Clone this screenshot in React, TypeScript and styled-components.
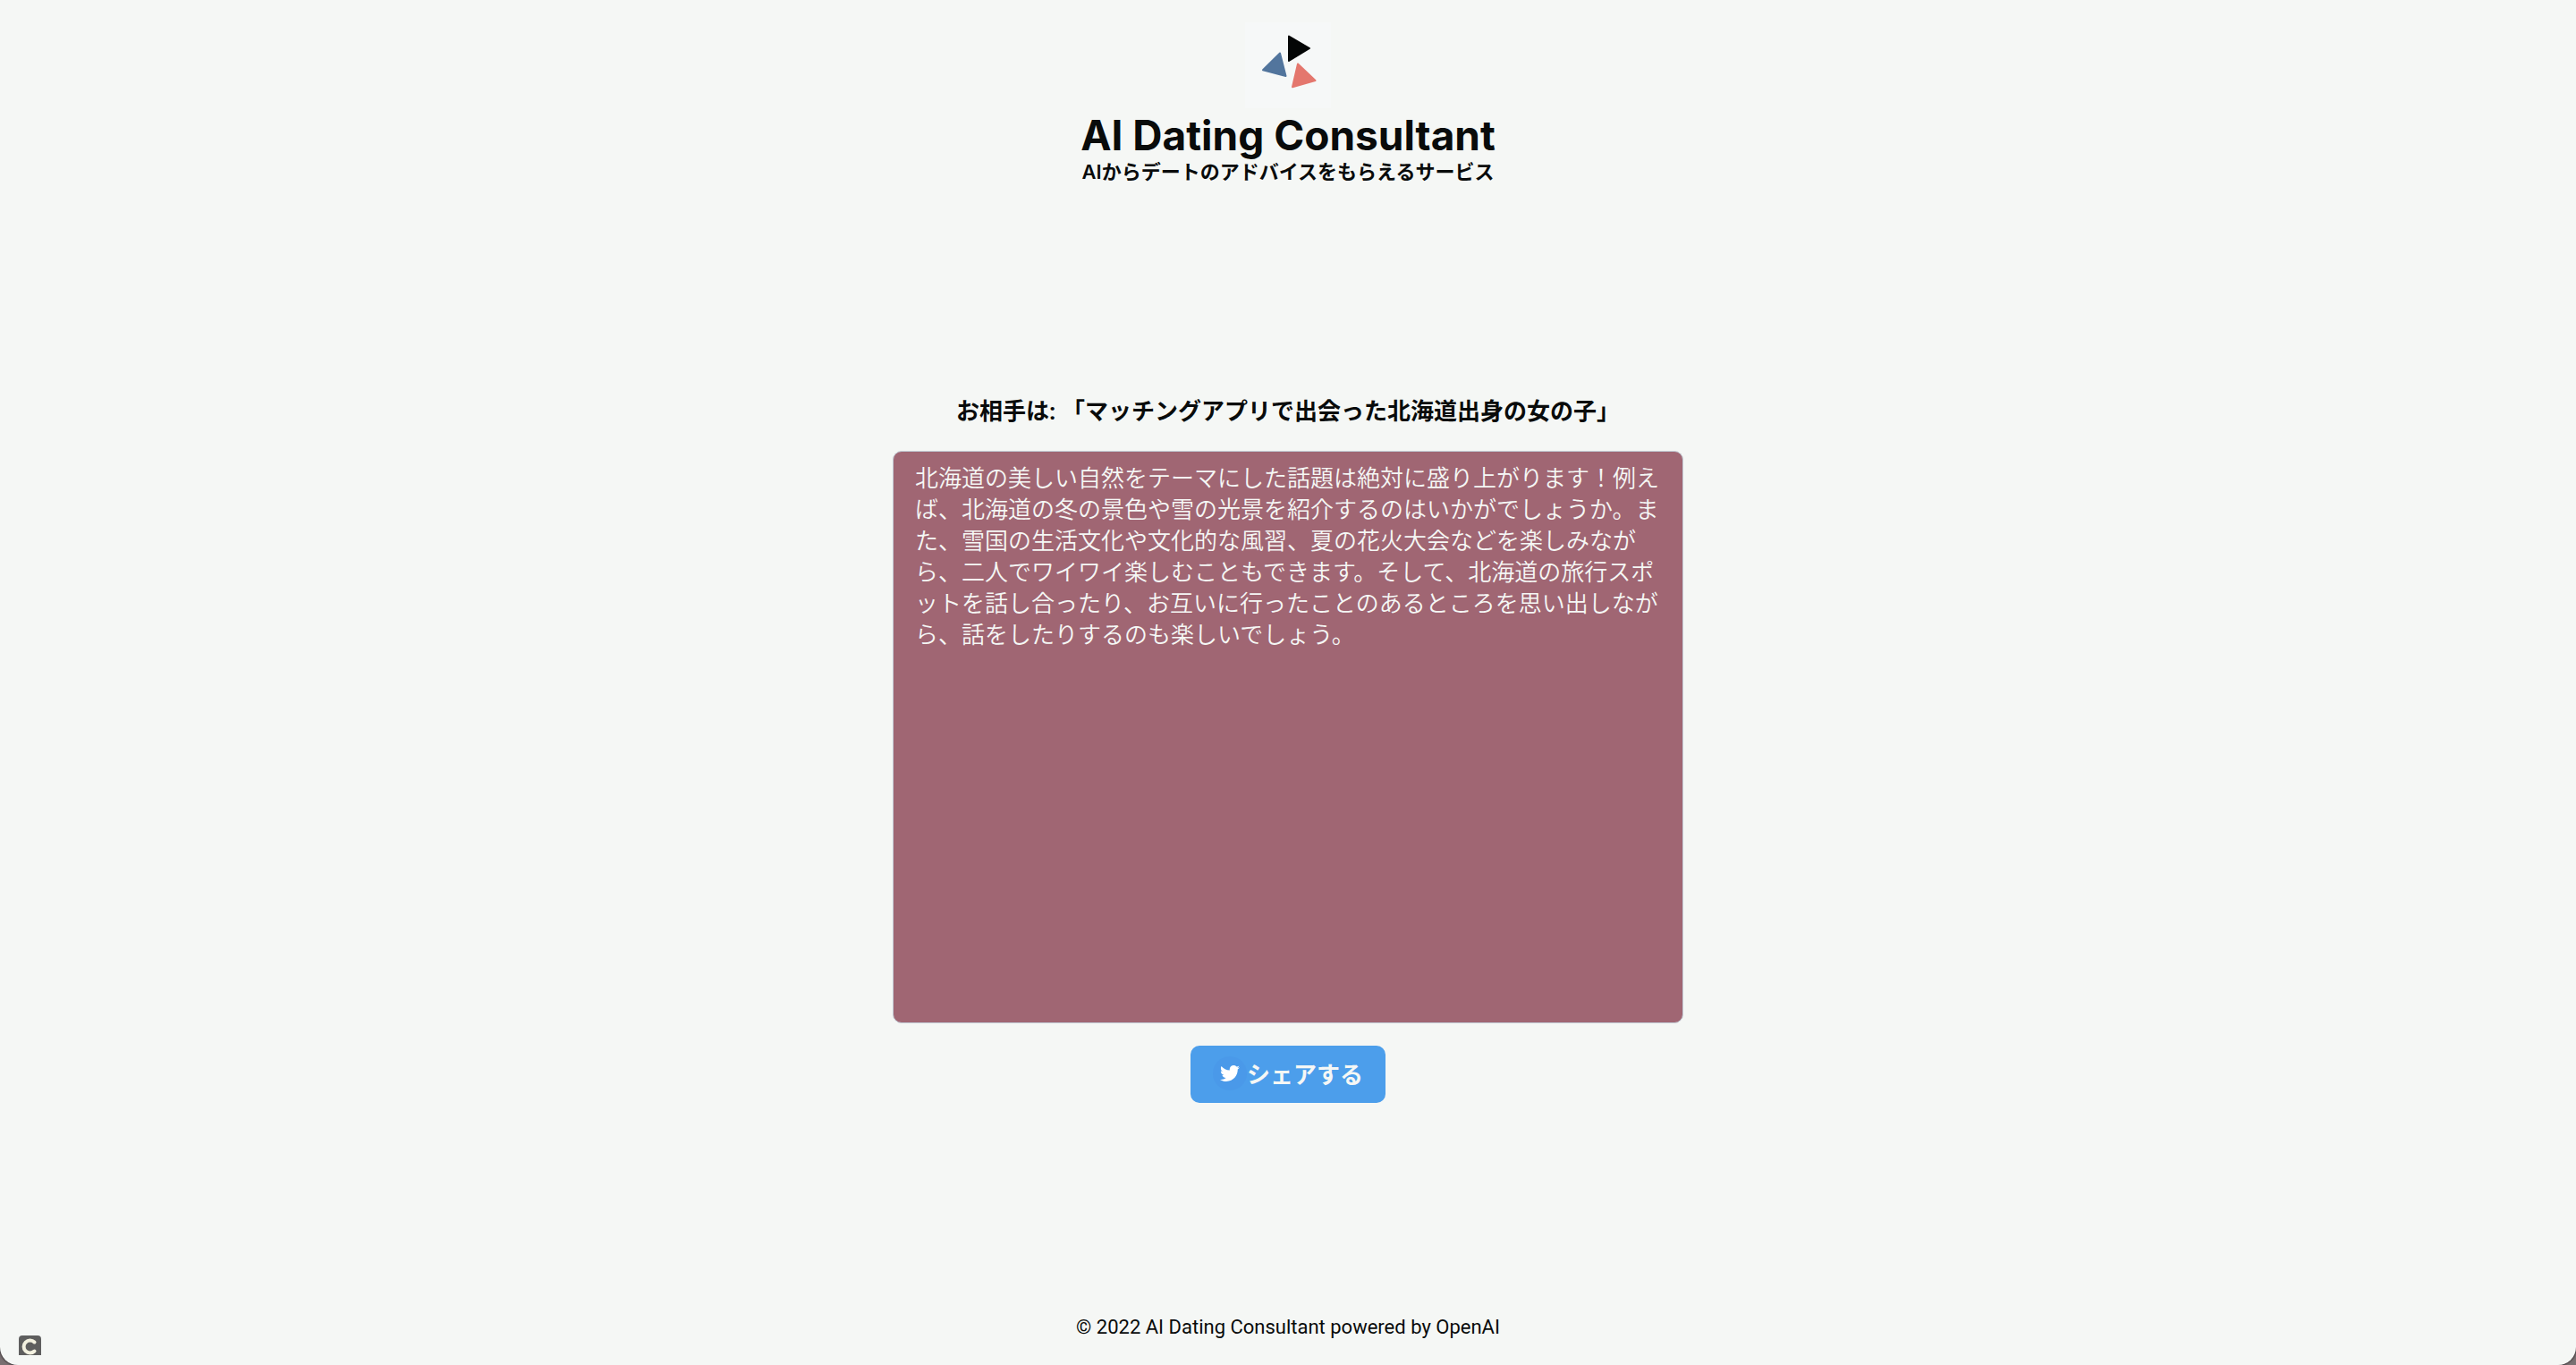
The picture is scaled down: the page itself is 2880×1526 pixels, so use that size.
import React from "react";
import styled, { createGlobalStyle } from "styled-components";
import { FaTwitter } from "react-icons/fa";

const GlobalStyle = createGlobalStyle`
  *, *::before, *::after { box-sizing: border-box; }
  html { background: #7a7072; }
  body {
    margin: 0;
    color: #090b0b;
    font-family: Roboto, "Noto Sans CJK JP", sans-serif;
  }
  h1, h2, p { margin: 0; }
`;

const Page = styled.div`
  position: relative;
  display: flex;
  flex-direction: column;
  min-height: 100vh;
  background: #f5f7f5;
  border-radius: 0 0 20px 20px;
  box-shadow: 0 0 2px 1px #3c3638;
`;

const Header = styled.header`
  display: flex;
  flex-direction: column;
  align-items: center;
  padding-top: 25px;
`;

const Logo = styled.svg`
  width: 96px;
  height: 96px;
  background: #f6f8f8;
`;

const Title = styled.h1`
  font-family: Inter, sans-serif;
  font-size: 46px;
  line-height: 60px;
  font-weight: 700;
`;

const Tagline = styled.p`
  font-family: Inter, "Noto Sans CJK JP", sans-serif;
  font-size: 22px;
  line-height: 22px;
  font-weight: 600;
`;

const Main = styled.main`
  flex: 1;
  display: flex;
  flex-direction: column;
  align-items: center;
  justify-content: center;
  padding: 0 24px;
`;

const Partner = styled.h2`
  font-size: 26px;
  line-height: 38px;
  font-weight: 700;
`;

const Advice = styled.p`
  width: 100%;
  max-width: 884px;
  min-height: 640px;
  margin: 25px 0;
  padding: 13px 24px;
  border: 1px solid #c3ccd6;
  border-radius: 10px;
  background: #a06673;
  color: #f5f7f5;
  font-size: 26px;
  line-height: 35px;
  font-weight: 350;
`;

const ShareButton = styled.button`
  display: flex;
  align-items: center;
  height: 64px;
  padding: 0 25px 2px;
  border: 0;
  border-radius: 10px;
  background: #4c9eeb;
  color: #f5f7f5;
  font: inherit;
  font-size: 26px;
  font-weight: 700;
  cursor: pointer;
`;

const IconCircle = styled.span`
  display: grid;
  place-items: center;
  width: 38px;
  height: 38px;
  border-radius: 50%;
  background: #4a99e9;
  color: #ffffff;
  font-size: 22px;
`;

const Footer = styled.footer`
  padding: 0 24px 28px;
  text-align: center;
  font-size: 22px;
  line-height: 28px;
`;

const CornerBadge = styled.svg`
  position: absolute;
  left: 21px;
  bottom: 11px;
  width: 25px;
  height: 22px;
`;

export default function App() {
  return (
    <>
      <GlobalStyle />
      <Page>
        <Header>
          <Logo viewBox="0 0 96 96" role="img" aria-label="AI Dating Consultant">
            <g strokeWidth="2" strokeLinejoin="round">
              <path d="M49 15.5 72 29 49 43Z" fill="#040606" stroke="#040606" />
              <path d="M39 34.5 20 53.2 45.5 60Z" fill="#52759d" stroke="#52759d" />
              <path d="M59 46.5 78.5 65 53 72.3Z" fill="#e4776e" stroke="#e4776e" />
            </g>
          </Logo>
          <Title>AI Dating Consultant</Title>
          <Tagline>AIからデートのアドバイスをもらえるサービス</Tagline>
        </Header>
        <Main>
          <Partner>お相手は: 「マッチングアプリで出会った北海道出身の女の子」</Partner>
          <Advice>
            北海道の美しい自然をテーマにした話題は絶対に盛り上がります！例えば、北海道の冬の景色や雪の光景を紹介するのはいかがでしょうか。また、雪国の生活文化や文化的な風習、夏の花火大会などを楽しみながら、二人でワイワイ楽しむこともできます。そして、北海道の旅行スポットを話し合ったり、お互いに行ったことのあるところを思い出しながら、話をしたりするのも楽しいでしょう。
          </Advice>
          <ShareButton type="button">
            <IconCircle>
              <FaTwitter aria-hidden="true" />
            </IconCircle>
            シェアする
          </ShareButton>
        </Main>
        <Footer>© 2022 AI Dating Consultant powered by OpenAI</Footer>
        <CornerBadge viewBox="0 0 25 22" aria-hidden="true">
          <path d="M4 0H21Q25 0 25 4V22H0V4Q0 0 4 0Z" fill="#5e5e5e" />
          <path d="M17.5 7.5A7 7 0 1 0 17.5 17.5" fill="none" stroke="#f3f1e0" strokeWidth="4" strokeLinecap="round" />
        </CornerBadge>
      </Page>
    </>
  );
}
